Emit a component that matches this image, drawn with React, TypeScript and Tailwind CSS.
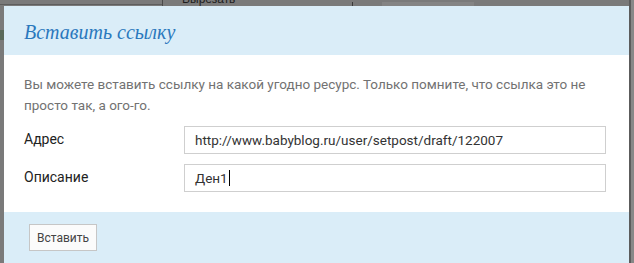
import React from "react";

export default function App() {
  return (
    <div className="relative w-[634px] h-[263px] bg-[#7a7a7a] overflow-hidden" style={{ fontFamily: 'Roboto, "Noto Sans", sans-serif' }}>
      {/* dimmed page behind */}
      <div className="absolute left-0 top-[4px] w-[162px] h-[1px] bg-[#5e5e5e]" />
      <div className="absolute left-[162px] top-0 w-[1px] h-[6px] bg-[#4a4a4a]" />
      <div className="absolute left-[352px] top-[2px] w-[1px] h-[4px] bg-[#3a3a3a]" />
      <div className="absolute left-[382px] top-[2px] w-[92px] h-[4px] bg-[#848484]" />
      <div className="absolute left-[182px] top-[-8px] text-[12px] leading-[14px] text-[#1e1e1e]" style={{ fontFamily: '"Liberation Sans", sans-serif' }}>Вырезать</div>
      <div className="absolute left-0 top-[30px] w-[4px] h-[10px] bg-[#5a6a5a]" />
      <div className="absolute left-[629px] top-0 w-[2px] h-[263px] bg-[#5c5c5c]" />
      <div className="absolute left-[631px] top-0 w-[3px] h-[263px] bg-[#888]" />

      <div className="absolute left-[4px] top-[6px] w-[625px] h-[257px] flex flex-col">
        <div className="h-[49px] bg-[#daedf8] flex items-center pl-[20px] pt-[2px]">
          <span className="text-[20px] italic text-[#2a78bd]" style={{ fontFamily: '"Liberation Serif", serif' }}>Вставить ссылку</span>
        </div>
        <div className="h-[157px] bg-white px-[20px] pt-[19px] flex flex-col">
          <p className="text-[13.5px] leading-[21px] text-[#727272]">
            Вы можете вставить ссылку на какой угодно ресурс. Только помните, что ссылка это не просто так, а ого-го.
          </p>
          <div className="mt-[10px] flex items-center">
            <span className="w-[160px] text-[14px] text-[#222] pb-[2px]">Адрес</span>
            <div className="w-[422px] h-[28px] border border-[#cfcfcf] flex items-center px-[10px] text-[13.5px] text-[#333]">
              http://www.babyblog.ru/user/setpost/draft/122007
            </div>
          </div>
          <div className="mt-[10px] flex items-center">
            <span className="w-[160px] text-[14px] text-[#222] pb-[2px]">Описание</span>
            <div className="w-[422px] h-[28px] border border-[#cfcfcf] flex items-center px-[10px] text-[13.5px] text-[#333]">
              Ден1<span className="inline-block w-[1px] h-[16px] bg-black ml-[1px]" />
            </div>
          </div>
        </div>
        <div className="flex-1 bg-[#daedf8] flex items-start pl-[25px] pt-[12px]">
          <button className="w-[68px] h-[27px] bg-[#fbfbfb] border border-[#c6c6c6] text-[12px] text-[#444]">Вставить</button>
        </div>
      </div>
    </div>
  );
}
